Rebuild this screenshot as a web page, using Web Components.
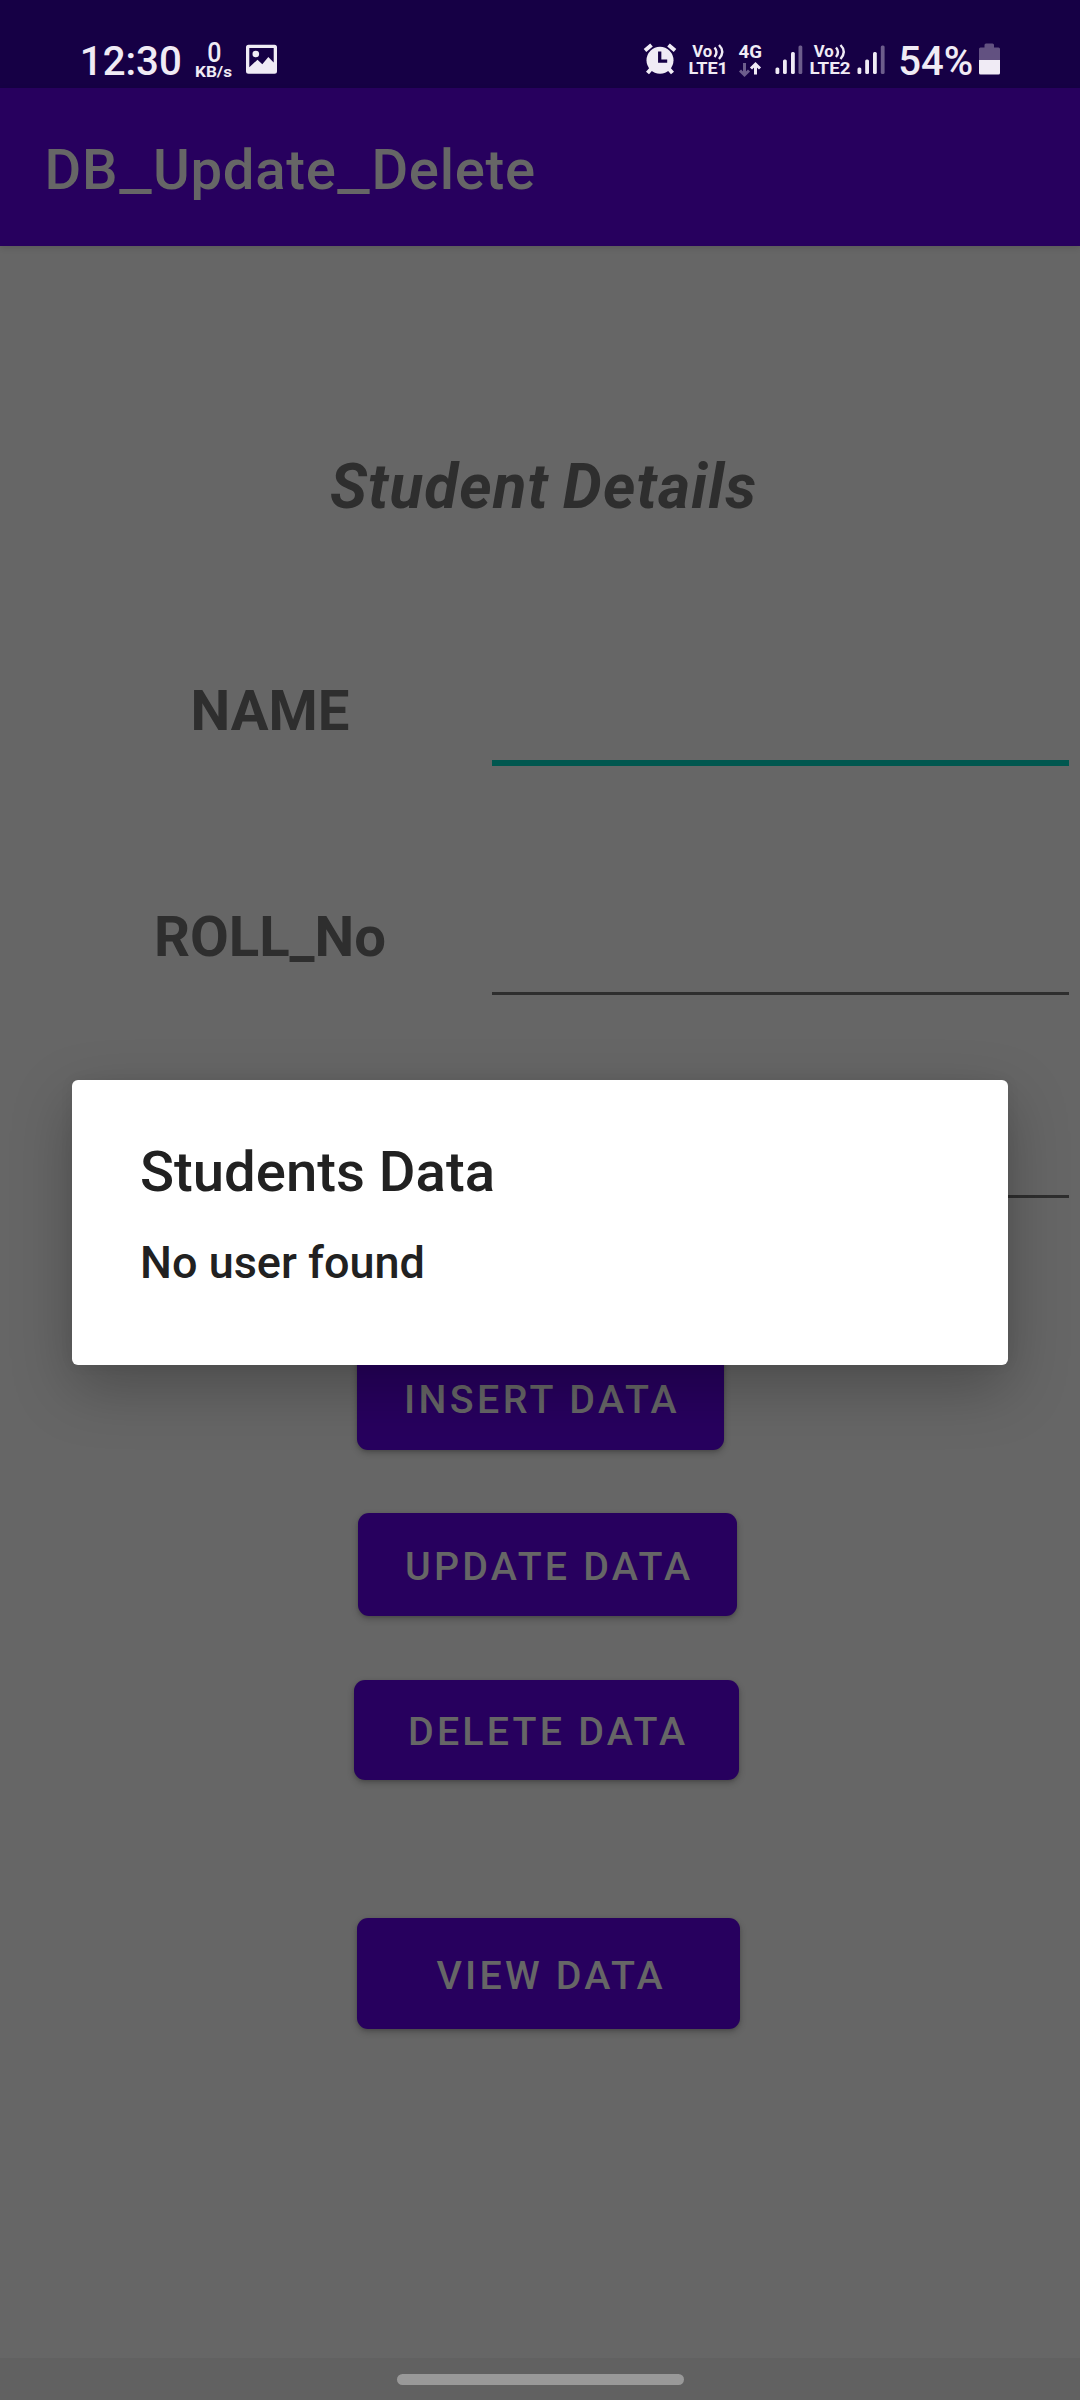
<!DOCTYPE html>
<html lang="en">
<head>
<meta charset="utf-8">
<title>DB_Update_Delete</title>
<style>
html,body{margin:0;background:#666}
body{font-family:Roboto,"Liberation Sans",sans-serif;width:1080px;height:2400px;overflow:hidden}
app-bar span{display:inline-block;transform:scaleX(1.29);margin:0 4.1px 0 4.9px}
</style>
</head>
<body>
<phone-screen>
  <status-bar slot="status"></status-bar>
  <app-bar slot="bar">DB<span>_</span>Update<span>_</span>Delete</app-bar>
  <student-form>
    <span slot="heading">Student Details</span>
    <form-row focused style="--row:320px;--up:55px">NAME</form-row>
    <form-row style="--row:229px;--up:58px">ROLL_No</form-row>
    <form-row style="--row:203px;--up:58px"></form-row>
    <action-button style="--l:357px;--w:367px;--h:104px;--gap:148px;--pad:47px;--dy:4px;--ls:3.4px">INSERT DATA</action-button>
    <action-button style="--l:358px;--w:379px;--h:103px;--gap:63px;--pad:47px;--dy:4px;--ls:3.2px">UPDATE DATA</action-button>
    <action-button style="--l:354px;--w:385px;--h:100px;--gap:64px;--pad:54px;--dy:3px;--ls:3.2px">DELETE DATA</action-button>
    <action-button style="--l:357px;--w:383px;--h:111px;--gap:138px;--pad:79.5px;--dy:4px;--ls:3.2px">VIEW DATA</action-button>
  </student-form>
  <nav-bar slot="nav"></nav-bar>
  <alert-dialog slot="dialog"><span slot="title">Students Data</span>No user found</alert-dialog>
</phone-screen>
<script>
const define = (name, html) => {
  const t = document.createElement('template');
  t.innerHTML = html;
  customElements.define(name, class extends HTMLElement {
    constructor() {
      super();
      this.attachShadow({mode: 'open'}).append(t.content.cloneNode(true));
    }
  });
};

define('phone-screen', `<style>
:host{display:flex;flex-direction:column;width:1080px;height:2400px;background:#666;position:relative;overflow:hidden}
main{flex:1;min-height:0}
</style><slot name="status"></slot><slot name="bar"></slot><main><slot></slot></main><slot name="nav"></slot><slot name="dialog"></slot>`);

define('status-bar', `<style>
:host{display:block;height:88px;background:#160045;flex:none}
svg{display:block;font-family:Roboto,sans-serif;font-weight:500}
.b{font-weight:700}
</style>
<svg width="1080" height="88" viewBox="0 0 1080 88" fill="#f0ebf5">
  <text x="79.8" y="75" font-size="41" textLength="102" lengthAdjust="spacingAndGlyphs">12:30</text>
  <text x="207.200" y="62" font-size="28" textLength="14.200" lengthAdjust="spacingAndGlyphs">0</text>
  <text class="b" x="195" y="76.600" font-size="15.300" textLength="37" lengthAdjust="spacingAndGlyphs">KB/s</text>
  <path fill-rule="evenodd" d="M248.500 44.700h26a2.500 2.500 0 0 1 2.500 2.500v24a2.500 2.500 0 0 1-2.500 2.500h-26a2.500 2.500 0 0 1-2.500-2.500v-24a2.500 2.500 0 0 1 2.500-2.500zm.8 3.300v19.200l8.200-7.500 4.800 4.500 6-7.200 5.400 5.400V48z"/>
  <circle cx="255.800" cy="54" r="3.300"/>
  <circle cx="660" cy="60.200" r="13.500"/>
  <path d="M645 50.500l6.500-5.500M675 50.500l-6.500-5.500M651 69l-3.500 4M669 69l3.500 4" stroke="#f0ebf5" stroke-width="4" fill="none"/>
  <path d="M659.700 51.500v9.700h7.500" fill="none" stroke="#160045" stroke-width="3.300"/>
  <g class="b">
    <text x="692.300" y="57" font-size="16.500" textLength="20" lengthAdjust="spacingAndGlyphs">Vo</text>
    <path d="M714.500 47.500q4 4.500 0 9.500M719 45q6.500 6.500 0 14" fill="none" stroke="#f0ebf5" stroke-width="2.400"/>
    <text x="688.500" y="74" font-size="17" textLength="39.500" lengthAdjust="spacingAndGlyphs">LTE1</text>
    <text x="738.500" y="58.300" font-size="18" textLength="23.500" lengthAdjust="spacingAndGlyphs">4G</text>
    <text x="813.800" y="57" font-size="16.500" textLength="20" lengthAdjust="spacingAndGlyphs">Vo</text>
    <path d="M836 47.500q4 4.500 0 9.500M840.500 45q6.500 6.500 0 14" fill="none" stroke="#f0ebf5" stroke-width="2.400"/>
    <text x="809.500" y="74" font-size="17" textLength="41" lengthAdjust="spacingAndGlyphs">LTE2</text>
  </g>
  <path d="M744.500 63v11M740 70.500l4.500 4.500 4.500-4.500" fill="none" stroke="#6d5d8c" stroke-width="3"/>
  <path d="M755.500 74.500V64M751 68.500l4.500-4.500 4.500 4.500" fill="none" stroke="#f0ebf5" stroke-width="3"/>
  <rect x="775.500" y="67.500" width="3.800" height="6.500" rx="1.500"/><rect x="783" y="59.500" width="3.800" height="14.500" rx="1.500"/><rect x="791" y="52" width="3.800" height="22" rx="1.500"/><rect x="798.500" y="45.500" width="3.800" height="28.500" rx="1.500" fill="#6d5d8c"/>
  <rect x="857.500" y="67.500" width="3.800" height="6.500" rx="1.500"/><rect x="865.200" y="59.500" width="3.800" height="14.500" rx="1.500"/><rect x="873" y="52" width="3.800" height="22" rx="1.500"/><rect x="880.800" y="45.500" width="3.800" height="28.500" rx="1.500" fill="#6d5d8c"/>
  <text x="898.300" y="75" font-size="41" textLength="75" lengthAdjust="spacingAndGlyphs">54%</text>
  <path d="M979 60V49q0-1.500 1.500-1.500h4V45q0-1.500 1.500-1.500h6.500q1.500 0 1.500 1.500v2.500h4.500q1.500 0 1.500 1.500v11z" fill="#625181"/>
  <path d="M979 60h21v13q0 1.500-1.500 1.500h-18q-1.500 0-1.500-1.500z"/>
</svg>`);

define('app-bar', `<style>
:host{display:block;flex:none;box-sizing:border-box;height:158px;padding:48.5px 0 0 44.5px;background:#27005e;color:#666;white-space:nowrap;
font-size:56.25px;line-height:66px;font-weight:500;letter-spacing:.0125em;position:relative;box-shadow:0 2px 6px rgba(0,0,0,.12)}
</style><slot></slot>`);

define('student-form', `<style>
:host{display:block}
h1{margin:0;padding:205px 0 0 330px;height:72px;line-height:72px;font-size:61.875px;font-weight:700;font-style:italic;color:#2e2e2e;letter-spacing:1.150px;word-spacing:-2.500px}
.list{display:flex;flex-direction:column;margin-top:-3px}
</style><h1><slot name="heading"></slot></h1><div class="list"><slot></slot></div>`);

define('form-row', `<style>
:host{display:flex;align-items:flex-end;height:var(--row);margin-left:61px;flex:none}
:host(:first-of-type){height:246px}
label{width:418px;margin-right:13px;line-height:66px;padding-bottom:calc(var(--up) - 33px);text-align:center;font-size:56.25px;font-weight:700;color:#2e2e2e}
i{width:577px;height:3px;background:#2e2e2e}
:host([focused]) i{height:6px;background:#01574f}
</style><label><slot></slot></label><i></i>`);

define('action-button', `<style>
:host{display:flex;align-items:center;flex:none;box-sizing:border-box;margin:var(--gap) 0 0 var(--l);width:var(--w);height:var(--h);padding:var(--dy) 0 0 var(--pad);
border-radius:11px;background:#27005e;color:#666;font-size:39.375px;line-height:46px;font-weight:500;letter-spacing:var(--ls);white-space:nowrap;
box-shadow:0 3px 7px rgba(0,0,0,.24),0 1px 3px rgba(0,0,0,.12)}
</style><slot></slot>`);

define('nav-bar', `<style>
:host{display:flex;justify-content:center;flex:none;box-sizing:border-box;height:42px;padding-top:15.5px;background:#616161}
i{width:287px;height:11px;border-radius:6px;background:#999}
</style><i></i>`);

define('alert-dialog', `<style>
:host{display:block;position:absolute;left:72px;top:1080px;width:936px;height:285px;box-sizing:border-box;padding:59px 0 0 68px;border-radius:6px;background:#fff;color:#212121;
box-shadow:0 22px 60px rgba(0,0,0,.26),0 0 14px rgba(0,0,0,.06)}
h2{margin:0;font-size:56.25px;line-height:66px;font-weight:500}
p{margin:31px 0 0;font-size:45px;line-height:54px;font-weight:500}
</style><h2><slot name="title"></slot></h2><p><slot></slot></p>`);
</script>
</body>
</html>
